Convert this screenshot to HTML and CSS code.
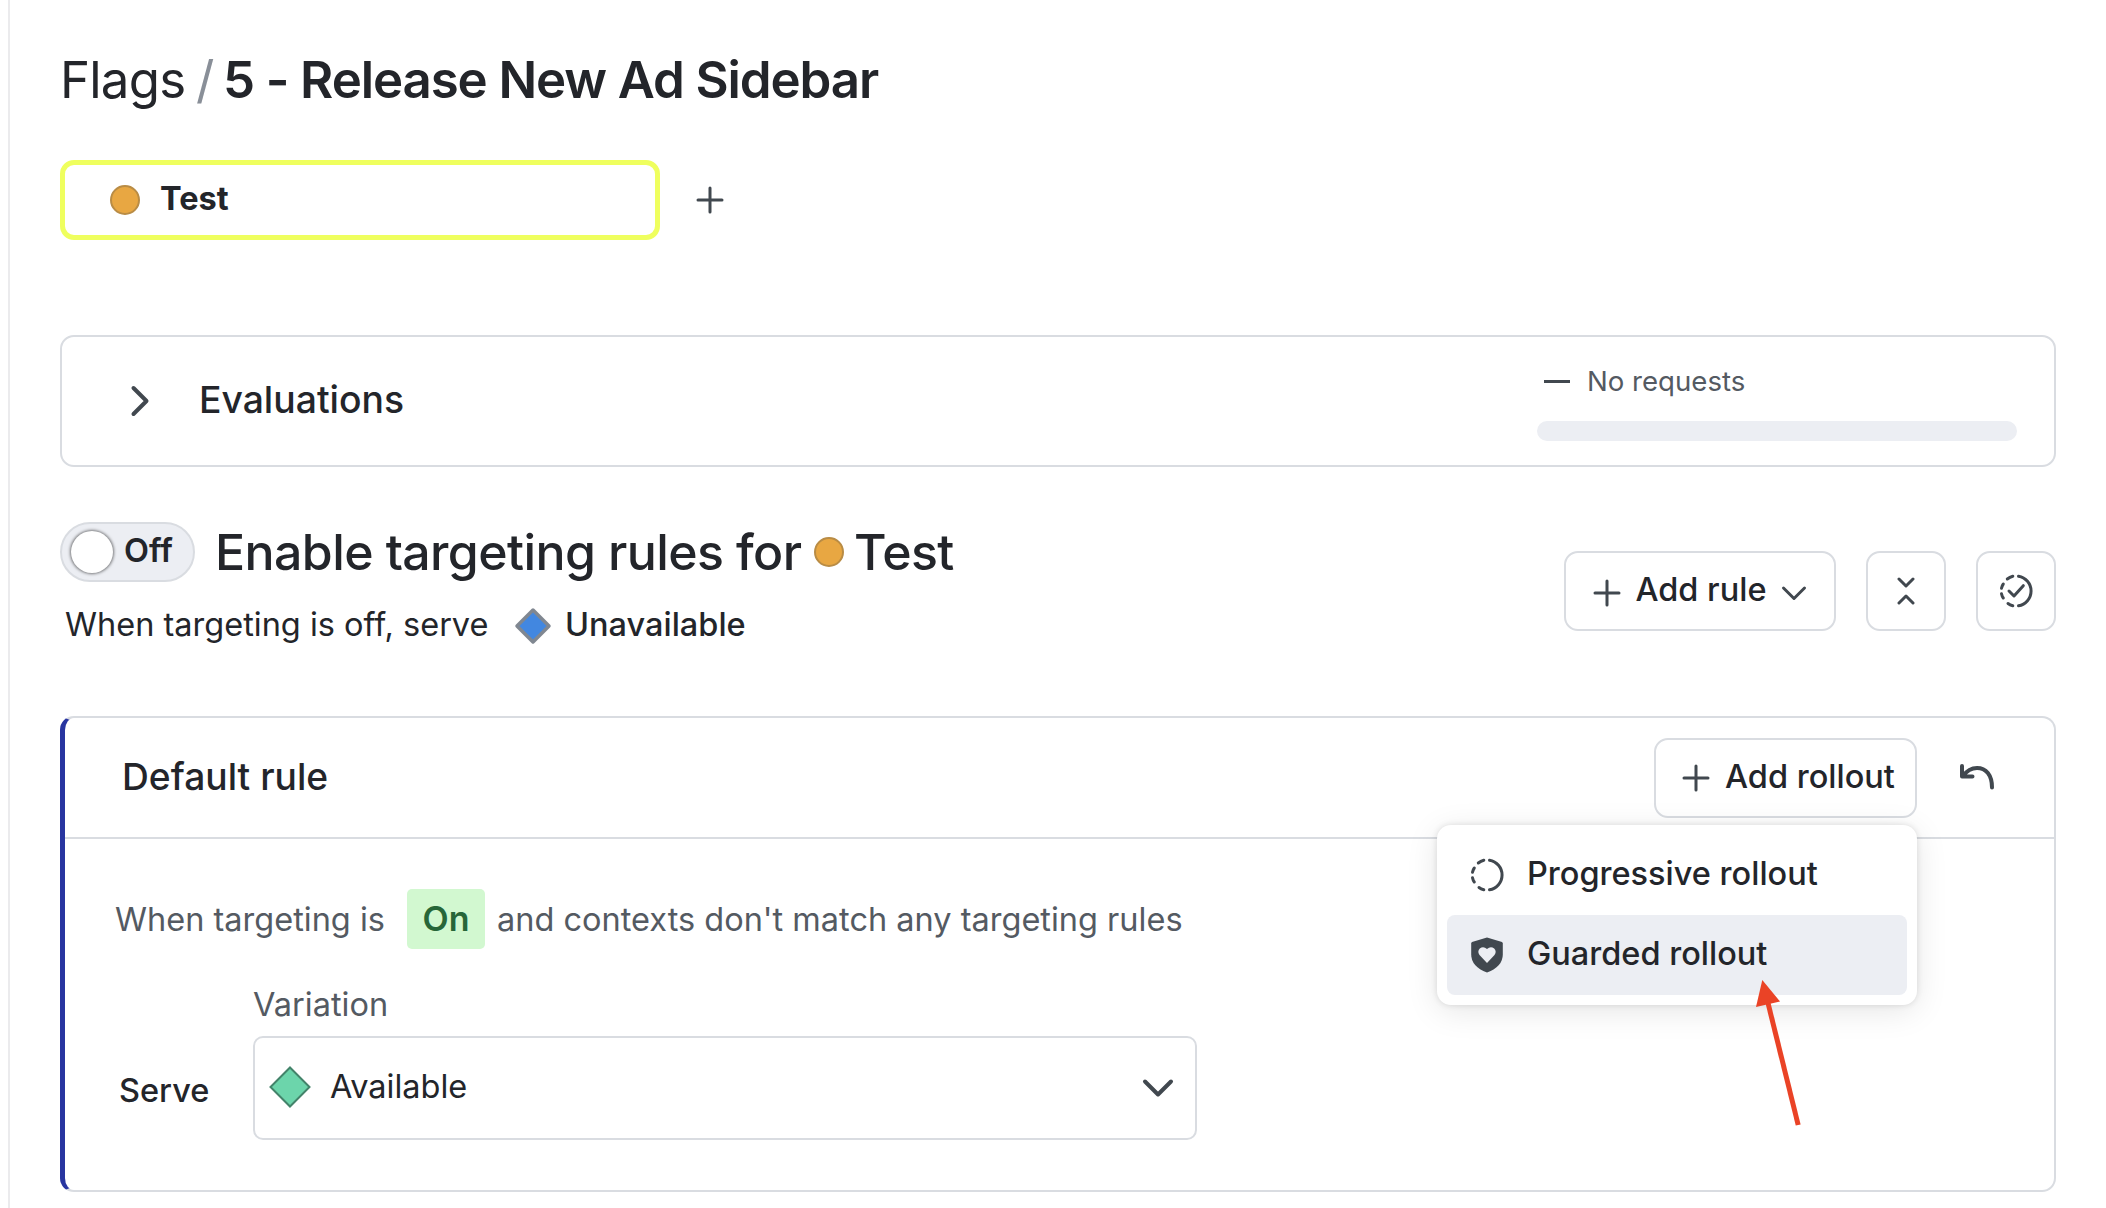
FILE: index.html
```html
<!DOCTYPE html>
<html lang="en">
<head>
<meta charset="utf-8">
<title>Flags / 5 - Release New Ad Sidebar</title>
<link rel="stylesheet" href="styles.css">
</head>
<body>
<main class="page">
  <h1 class="breadcrumb"><span class="crumb">Flags</span><span class="slash">/</span><span class="name">5 - Release New Ad Sidebar</span></h1>

  <div class="tabs">
    <div class="tab"><span class="dot"></span><span class="tab-label">Test</span></div>
    <svg class="icon" width="28" height="28" viewBox="0 0 28 28"><path d="M14 2v24M2 14h24"/></svg>
  </div>

  <section class="evaluations">
    <svg class="icon" width="20" height="32" viewBox="0 0 20 32"><path class="bold" d="M3.500 3l13 13-13 13"/></svg>
    <h2 class="eval-title">Evaluations</h2>
    <div class="requests">
      <div class="requests-label"><span class="dash"></span>No requests</div>
      <div class="bar"></div>
    </div>
  </section>

  <section class="targeting">
    <div class="targeting-info">
      <div class="enable">
        <div class="toggle"><span class="knob"></span><span class="raised">Off</span></div>
        <h2 class="enable-title">Enable targeting rules for</h2>
        <span class="dot"></span>
        <span class="enable-env">Test</span>
      </div>
      <div class="off-serve">
        <span class="off-text raised">When targeting is off, serve</span>
        <svg class="diamond" width="38" height="38" viewBox="0 0 38 38"><path d="M19 3l16 16-16 16L3 19z" fill="#4287e0" stroke="#808791" stroke-width="3.500" stroke-linejoin="round"/></svg>
        <span class="off-value raised">Unavailable</span>
      </div>
    </div>
    <div class="actions">
      <button class="btn add-rule">
        <svg class="icon" width="28" height="32" viewBox="0 0 28 32"><path d="M14 6v24M2 18h24"/></svg>
        <span class="raised">Add rule</span>
        <svg class="icon" width="26" height="20" viewBox="0 0 26 20"><path d="M2.500 7L13 17.500 23.500 7"/></svg>
      </button>
      <button class="btn square"><svg class="icon" width="20" height="28" viewBox="0 0 20 28"><path d="M3 2l7 7 7-7M3 26l7-7 7 7"/></svg></button>
      <button class="btn square"><svg class="icon" width="36" height="36" viewBox="0 0 36 36"><path d="M20.500 3.200a15 15 0 0 1 0 29.600M9.300 6q2.500-2 5.500-2.800M3.500 15.300q.5-2.500 1.800-4.300M3.500 20.700q.5 2.500 1.800 4.300M10 30.500q2 1.500 4.800 2.300M11 18l5 5 9.300-10.300"/></svg></button>
    </div>
  </section>

  <section class="rule">
    <header class="rule-head">
      <h3 class="rule-title">Default rule</h3>
      <div class="rollout">
        <button class="btn add-rollout">
          <svg class="icon" width="28" height="28" viewBox="0 0 28 28"><path d="M14 2v24M2 14h24"/></svg>
          <span class="raised">Add rollout</span>
        </button>
        <div class="menu">
          <div class="menu-item">
            <svg class="icon" width="36" height="36" viewBox="0 0 36 36"><path d="M20.500 3.200a15 15 0 0 1 0 29.600M9.300 6q2.500-2 5.500-2.800M3.500 15.300q.5-2.500 1.800-4.300M3.500 20.700q.5 2.500 1.800 4.300M10 30.500q2 1.500 4.800 2.300"/></svg>
            <span class="raised">Progressive rollout</span>
          </div>
          <div class="menu-item selected">
            <svg width="36" height="36" viewBox="0 0 36 36"><path d="M18 .5l15 4.500q.8.500.8 1.500v11q0 12-15.800 18Q2.200 29.500 2.200 17.500v-11Q2.200 5.500 3 5z" fill="#41484f"/><path d="M18 26l-7.500-8q-2.500-3.500.3-6.500 3.600-3 7.200.6 3.600-3.600 7.200-.6 2.800 3 .3 6.500z" fill="#eceef3"/></svg>
            <span class="raised">Guarded rollout</span>
          </div>
        </div>
        <svg class="arrow" width="50" height="150" viewBox="0 0 50 150"><path d="M12.500 21L43.200 145" stroke="#ea4326" stroke-width="5"/><path d="M7.300 0L25 21.500 1 27z" fill="#ea4326"/></svg>
      </div>
      <svg class="icon undo" width="36" height="28" viewBox="0 0 36 28"><path class="bold" d="M3 2v10.500h10.500M4 12C8 6.500 13 4 18 4c9 0 15 7 15 19.500"/></svg>
    </header>
    <div class="rule-body">
      <p class="condition"><span class="cond-a">When targeting is</span><span class="on">On</span><span class="cond-b">and contexts don't match any targeting rules</span></p>
      <div class="serve">
        <span class="serve-label">Serve</span>
        <div class="field">
          <span class="variation">Variation</span>
          <div class="select">
            <svg width="42" height="44" viewBox="0 0 42 44"><path d="M21 1.500L40.500 21 21 40.500 1.500 21z" fill="#6cd5ab" stroke="#43836a" stroke-width="2"/></svg>
            <span class="available raised">Available</span>
            <svg class="icon" width="32" height="20" viewBox="0 0 32 20"><path class="bold" d="M3 3.500l13 13 13-13"/></svg>
          </div>
        </div>
      </div>
    </div>
  </section>
</main>
</body>
</html>
```
FILE: styles.css
```css
* { box-sizing: border-box; }
body {
  margin: 0;
  background: #fff;
  color: #23252a;
  font-family: Inter, "Liberation Sans", sans-serif;
  font-size: 32.5px;
  line-height: 40px;
  white-space: nowrap;
}
h1, h2, h3, p { margin: 0; font-weight: 500; }
.page {
  height: 1208px;
  margin-left: 8px;
  border-left: 2px solid #ebebed;
  padding: 48px 50px 0;
  overflow: hidden;
}
.icon { fill: none; stroke: #41484f; stroke-width: 3; stroke-linecap: round; stroke-linejoin: round; }
.icon .bold { stroke-width: 4; }
svg { flex: none; display: block; }
.dot { width: 30px; height: 30px; border-radius: 50%; background: #e8a742; border: 2px solid #b98c45; flex: none; }
/* optical centring of labels next to icons */
.raised { padding-bottom: 2px; }

.breadcrumb { display: flex; height: 64px; line-height: 64px; font-size: 51px; letter-spacing: -1.1px; }
.crumb { width: 136px; font-weight: 400; letter-spacing: -.8px; }
.slash { width: 27px; color: #898f98; font-weight: 400; }
.name { font-weight: 600; }

.tabs { display: flex; align-items: center; gap: 36px; margin-top: 48px; }
.tab { display: flex; align-items: center; gap: 20px; width: 600px; height: 80px; padding-left: 45px; border: 5px solid #efff5e; border-radius: 14px; }
.tab-label { padding-bottom: 2px; font-weight: 700; }

.evaluations { display: flex; align-items: center; height: 132px; margin-top: 95px; padding: 0 37px 0 68px; border: 2px solid #d9dce1; border-radius: 14px; }
.eval-title { margin-left: 49px; padding-bottom: 2px; font-size: 37.3px; }
.requests { width: 480px; margin-left: auto; }
.requests-label { display: flex; align-items: center; gap: 17px; padding-left: 7px; color: #545a62; font-size: 27.6px; }
.dash { width: 26px; height: 3px; background: #41484f; }
.bar { height: 20px; margin-top: 20px; border-radius: 10px; background: #eceef3; }

.targeting { display: flex; justify-content: space-between; margin-top: 54px; height: 195px; }
.enable { display: flex; align-items: center; height: 62px; font-size: 50px; line-height: 60px; letter-spacing: -.6px; }
.toggle { display: flex; align-items: center; gap: 11px; width: 135px; height: 60px; padding-left: 9px; border: 2px solid #d9dce1; border-radius: 30px; background: #eceef3; font-size: 32.5px; font-weight: 600; letter-spacing: 0; }
.knob { width: 42px; height: 42px; border-radius: 50%; background: #fff; box-shadow: 0 0 3px 1px rgba(0, 0, 0, .5); }
.enable-title { width: 599px; padding-left: 20px; font-size: inherit; }
.enable-title + .dot { margin-left: 20px; }
.enable-env { margin-left: 10px; font-weight: 500; }
.off-serve { display: flex; align-items: center; margin-top: 23px; height: 40px; padding-left: 5px; }
.off-text { width: 449px; }
.off-value { margin-left: 13px; font-weight: 500; }
.actions { display: flex; gap: 30px; padding-top: 30px; }
.btn { display: flex; align-items: center; justify-content: center; height: 80px; padding: 0; border: 2px solid #d9dce1; border-radius: 14px; background: #fff; color: inherit; font: inherit; font-weight: 500; }
.square { width: 80px; }
.add-rule { width: 272px; gap: 14px; }

.rule { height: 476px; border: 2px solid #d9dce1; border-left: 5px solid #2835a0; border-radius: 14px; }
.rule-head { display: flex; align-items: center; height: 121px; padding-left: 57px; border-bottom: 2px solid #d9dce1; }
.rule-title { padding-bottom: 2px; font-size: 37.2px; }
.rollout { position: relative; margin-left: auto; }
.add-rollout { width: 263px; gap: 15px; padding-left: 6px; }
.undo { margin: 0 59px 0 42px; }
.menu { position: absolute; z-index: 1; top: 87px; right: 0; width: 480px; height: 180px; padding: 10px; border-radius: 14px; background: #fff; box-shadow: 0 6px 32px rgba(0, 0, 0, .1), 0 0 6px rgba(0, 0, 0, .12); font-weight: 500; }
.menu-item { display: flex; align-items: center; gap: 22px; height: 80px; padding-left: 22px; border-radius: 8px; }
.selected { background: #eceef3; }
.arrow { position: absolute; z-index: 2; top: 242px; left: 101px; }

.rule-body { padding: 50px 0 0 50px; }
.condition { display: flex; align-items: center; height: 60px; color: #545a62; font-weight: 400; }
.cond-a { width: 292px; padding-top: 1px; }
.on { width: 78px; height: 60px; border-radius: 5px; background: #d2f8d0; color: #276638; font-size: 34px; font-weight: 600; line-height: 60px; text-align: center; }
.cond-b { margin-left: 12px; padding-top: 1px; }
.serve { display: flex; margin-top: 36px; }
.serve-label { width: 138px; padding: 86px 0 0 4px; font-weight: 500; }
.variation { display: block; height: 51px; color: #545a62; }
.select { display: flex; align-items: center; width: 944px; height: 104px; padding: 0 21px 0 14px; border: 2px solid #d9dce1; border-radius: 10px; }
.available { margin: 0 auto 0 19px; }
```
